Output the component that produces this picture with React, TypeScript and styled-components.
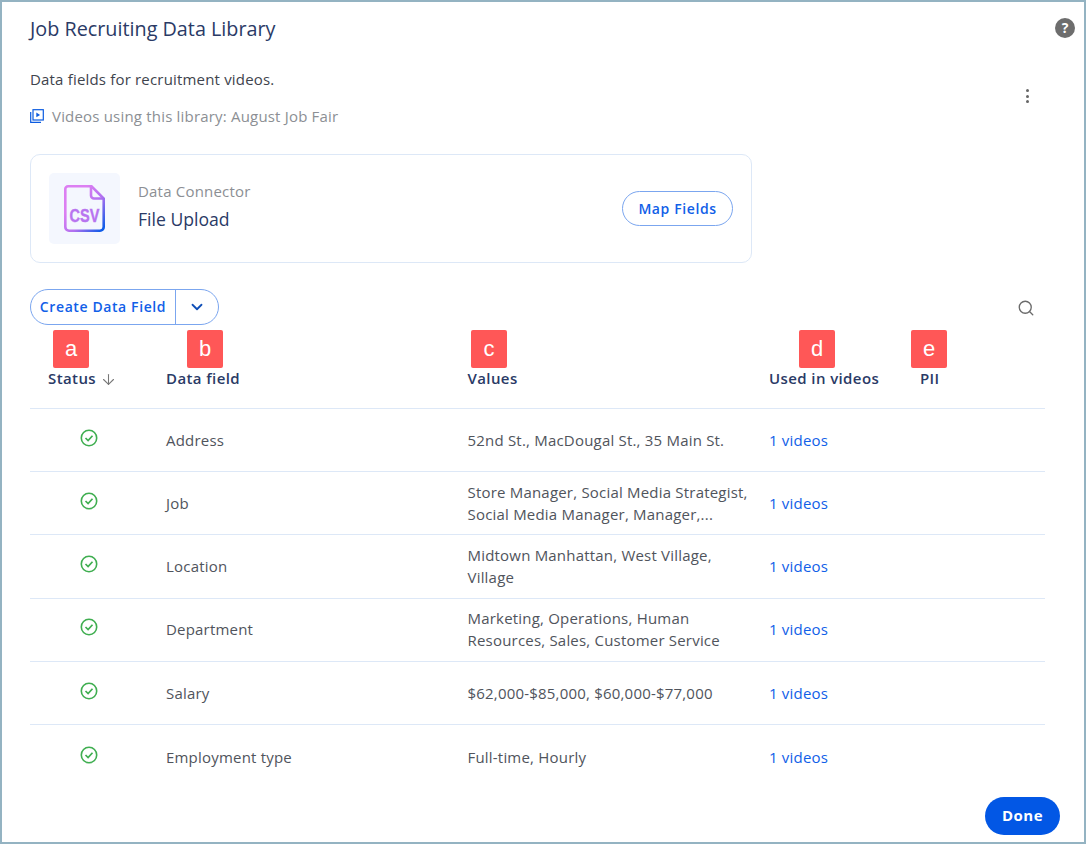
import styled, { createGlobalStyle } from 'styled-components'
import { ArrowDown, ChevronDown, Search } from 'lucide-react'

const rows = [
  { name: 'Address', values: ['52nd St., MacDougal St., 35 Main St.'] },
  { name: 'Job', values: ['Store Manager, Social Media Strategist,', 'Social Media Manager, Manager,...'] },
  { name: 'Location', values: ['Midtown Manhattan, West Village,', 'Village'] },
  { name: 'Department', values: ['Marketing, Operations, Human', 'Resources, Sales, Customer Service'] },
  { name: 'Salary', values: ['$62,000-$85,000, $60,000-$77,000'] },
  { name: 'Employment type', values: ['Full-time, Hourly'] },
]

const columns = [
  { title: 'Status', badge: 'a', badgeLeft: 23, sorted: true },
  { title: 'Data field', badge: 'b', badgeLeft: 21 },
  { title: 'Values', badge: 'c', badgeLeft: 3.5 },
  { title: 'Used in videos', badge: 'd', badgeLeft: 30 },
  { title: 'PII', badge: 'e', badgeLeft: -9 },
]

const CheckIcon = (): JSX.Element => (
  <svg width='18' height='18' viewBox='0 0 18 18' fill='none'>
    <circle cx='9' cy='9' r='7.7' stroke='#3fae50' strokeWidth='1.6' />
    <path d='M5.5 9l2.6 2.6 4.4-4.8' stroke='#3fae50' strokeWidth='1.7' />
  </svg>
)

const VideoIcon = (): JSX.Element => (
  <svg width='14' height='14' viewBox='0 0 14 14' fill='none'>
    <path d='M.7 3v10.3H11' stroke='#0b5be0' strokeWidth='1.2' />
    <rect x='3' y='.7' width='10.3' height='10.3' stroke='#0b5be0' strokeWidth='1.2' />
    <path d='M6.3 3.6v4.6l3.8-2.3z' fill='#0b5be0' />
  </svg>
)

const CsvIcon = (): JSX.Element => (
  <svg width='41' height='47' viewBox='0 0 41 47' fill='none'>
    <defs>
      <linearGradient id='csvGradient' x1='0' y1='8' x2='41' y2='42' gradientUnits='userSpaceOnUse'>
        <stop offset='0.25' stopColor='#dc7ff2' />
        <stop offset='0.6' stopColor='#b070f0' />
        <stop offset='1' stopColor='#0b5be8' />
      </linearGradient>
    </defs>
    <path
      d='M4 1.3h23.5L39.7 13.5V42a3.7 3.7 0 0 1-3.7 3.7H5A3.7 3.7 0 0 1 1.3 42V4A2.7 2.7 0 0 1 4 1.3z'
      stroke='url(#csvGradient)'
      strokeWidth='2.6'
    />
    <path d='M27 2v8.5a3 3 0 0 0 3 3h9' stroke='url(#csvGradient)' strokeWidth='2.6' />
    <text
      transform='translate(20.5 37) scale(1 1.27)'
      textAnchor='middle'
      fontFamily="'Liberation Sans', sans-serif"
      fontWeight='700'
      fontSize='14.5'
      fill='#b874f0'
      stroke='#b874f0'
      strokeWidth='0.3'
    >
      CSV
    </text>
  </svg>
)

const App = (): JSX.Element => (
  <>
    <GlobalStyle />
    <Frame>
      <HelpBadge>?</HelpBadge>
      <Title>Job Recruiting Data Library</Title>
      <Description>Data fields for recruitment videos.</Description>
      <MoreButton>
        <i />
        <i />
        <i />
      </MoreButton>
      <VideosLine>
        <VideoIcon />
        Videos using this library: August Job Fair
      </VideosLine>
      <ConnectorCard>
        <IconTile>
          <CsvIcon />
        </IconTile>
        <ConnectorText>
          <ConnectorLabel>Data Connector</ConnectorLabel>
          <ConnectorName>File Upload</ConnectorName>
        </ConnectorText>
        <MapButton>Map Fields</MapButton>
      </ConnectorCard>
      <Toolbar>
        <SplitButton>
          <SplitLabel>Create Data Field</SplitLabel>
          <SplitArrow>
            <ChevronDown size={18} strokeWidth={2.4} />
          </SplitArrow>
        </SplitButton>
        <SearchIcon size={18} color='#6b6b6b' strokeWidth={1.8} />
      </Toolbar>
      <HeaderRow>
        {columns.map((col) => (
          <HeaderCell key={col.title}>
            <Badge $left={col.badgeLeft}>{col.badge}</Badge>
            {col.title}
            {col.sorted && <ArrowDown size={17} color='#777' strokeWidth={1.5} />}
          </HeaderCell>
        ))}
      </HeaderRow>
      {rows.map((row, i) => (
        <Row key={row.name} $last={i === rows.length - 1}>
          <StatusCell>
            <CheckIcon />
          </StatusCell>
          <Cell>{row.name}</Cell>
          <Cell>
            {row.values.map((line) => (
              <div key={line}>{line}</div>
            ))}
          </Cell>
          <VideosLink>1 videos</VideosLink>
          <div />
        </Row>
      ))}
      <Footer>
        <DoneButton>Done</DoneButton>
      </Footer>
    </Frame>
  </>
)

const GlobalStyle = createGlobalStyle`
  html, body {
    margin: 0;
    padding: 0;
    background: #fff;
  }

  * {
    box-sizing: border-box;
  }
`

const Frame = styled.div`
  position: relative;
  width: 1086px;
  height: 844px;
  overflow: hidden;
  border: 2px solid #94b3c2;
  padding: 0 39px 0 28px;
  display: flex;
  flex-direction: column;
  font-family: 'Open Sans', sans-serif;
  color: #40444d;
`

const HelpBadge = styled.div`
  position: absolute;
  top: 16px;
  right: 9px;
  width: 20px;
  height: 20px;
  border-radius: 50%;
  background: #6d6d6d;
  color: #fff;
  font-size: 14px;
  font-weight: 700;
  line-height: 20px;
  text-align: center;
`

const Title = styled.h1`
  margin: 13px 0 0;
  font-size: 19.8px;
  font-weight: 400;
  line-height: 28px;
  color: #2a3a66;
`

const Description = styled.p`
  margin: 25px 0 0;
  font-size: 15px;
  letter-spacing: 0.18px;
  line-height: 22px;
  color: #40444d;
`

const MoreButton = styled.div`
  position: absolute;
  top: 87px;
  right: 55px;
  width: 3px;
  display: flex;
  flex-direction: column;
  gap: 2.6px;

  i {
    width: 3px;
    height: 3px;
    border-radius: 50%;
    background: #666;
  }
`

const VideosLine = styled.div`
  margin-top: 15px;
  display: flex;
  align-items: center;
  gap: 8px;
  font-size: 15px;
  letter-spacing: 0.19px;
  line-height: 22px;
  color: #8c8f94;
`

const ConnectorCard = styled.section`
  margin-top: 27px;
  width: 722px;
  height: 109px;
  padding: 0 18px;
  border: 1px solid #dde8f7;
  border-radius: 10px;
  display: flex;
  align-items: center;
`

const IconTile = styled.div`
  width: 71px;
  height: 71px;
  border-radius: 5px;
  background: #f4f7fe;
  display: grid;
  place-items: center;
`

const ConnectorText = styled.div`
  margin-left: 18px;
  flex: 1;
`

const ConnectorLabel = styled.div`
  font-size: 15px;
  letter-spacing: 0.2px;
  line-height: 20px;
  margin-top: -5px;
  color: #8c8f94;
`

const ConnectorName = styled.div`
  margin-top: 5px;
  font-size: 17.6px;
  line-height: 26px;
  color: #2a3a66;
`

const MapButton = styled.button`
  width: 111px;
  height: 35px;
  padding: 0;
  background: #fff;
  border: 1px solid #7ba6ef;
  border-radius: 18px;
  font-family: inherit;
  font-size: 14px;
  font-weight: 600;
  letter-spacing: 0.6px;
  color: #1160e8;
`

const Toolbar = styled.div`
  margin-top: 26px;
  padding-right: 10px;
  display: flex;
  align-items: center;
  justify-content: space-between;
`

const SearchIcon = styled(Search)`
  margin-top: 2px;
`

const SplitButton = styled.div`
  width: 189px;
  height: 36px;
  border: 1px solid #7ba6ef;
  border-radius: 18px;
  display: flex;
  align-items: stretch;
  color: #1160e8;
`

const SplitLabel = styled.div`
  width: 145px;
  border-right: 1px solid #7ba6ef;
  font-size: 14px;
  font-weight: 600;
  letter-spacing: 0.6px;
  line-height: 34px;
  text-align: center;
  white-space: nowrap;
`

const SplitArrow = styled.div`
  flex: 1;
  display: grid;
  place-items: center;
  color: #0f4fb8;
`

const gridColumns = '136px 301.5px 301.5px 151px 1fr'

const HeaderRow = styled.div`
  margin-top: 5px;
  height: 78.9px;
  display: grid;
  grid-template-columns: ${gridColumns};
  border-bottom: 1px solid #dde8f7;
`

const HeaderCell = styled.div`
  position: relative;
  padding-top: 37px;
  display: flex;
  align-items: flex-start;
  gap: 4px;
  font-size: 15px;
  font-weight: 600;
  line-height: 22px;
  letter-spacing: 0.4px;
  color: #2a3a66;
  white-space: nowrap;

  &:first-child {
    padding-left: 18px;
  }

  &:first-child svg {
    margin-top: 4px;
  }
`

const Badge = styled.span<{ $left: number }>`
  position: absolute;
  top: 0;
  left: ${(p) => p.$left}px;
  width: 36px;
  height: 38px;
  border-radius: 2px;
  background: #ff5757;
  color: #fff;
  font-family: 'Liberation Sans', sans-serif;
  font-size: 22px;
  font-weight: 400;
  line-height: 38px;
  text-align: center;
  letter-spacing: 0;
`

const Row = styled.div<{ $last: boolean }>`
  height: 63.3px;
  padding-bottom: 1px;
  display: grid;
  grid-template-columns: ${gridColumns};
  align-items: center;
  border-bottom: ${(p) => (p.$last ? 'none' : '1px solid #dde8f7')};
  font-size: 15px;
  letter-spacing: 0.2px;
  line-height: 22px;
  color: #50545c;
`

const StatusCell = styled.div`
  padding-left: 50px;
  height: 18px;
  transform: translateY(-2px);
`

const Cell = styled.div`
  white-space: nowrap;
`

const VideosLink = styled.div`
  color: #1160e8;
`

const Footer = styled.footer`
  flex: 1;
  margin-right: -15px;
  display: flex;
  justify-content: flex-end;
  align-items: flex-end;
  padding-bottom: 7px;
`

const DoneButton = styled.button`
  width: 75px;
  height: 38px;
  padding: 0 0 2px;
  border: none;
  border-radius: 19px;
  background: #0257e5;
  color: #fff;
  font-family: inherit;
  font-size: 15px;
  font-weight: 700;
  letter-spacing: 0.5px;
`

export default App
